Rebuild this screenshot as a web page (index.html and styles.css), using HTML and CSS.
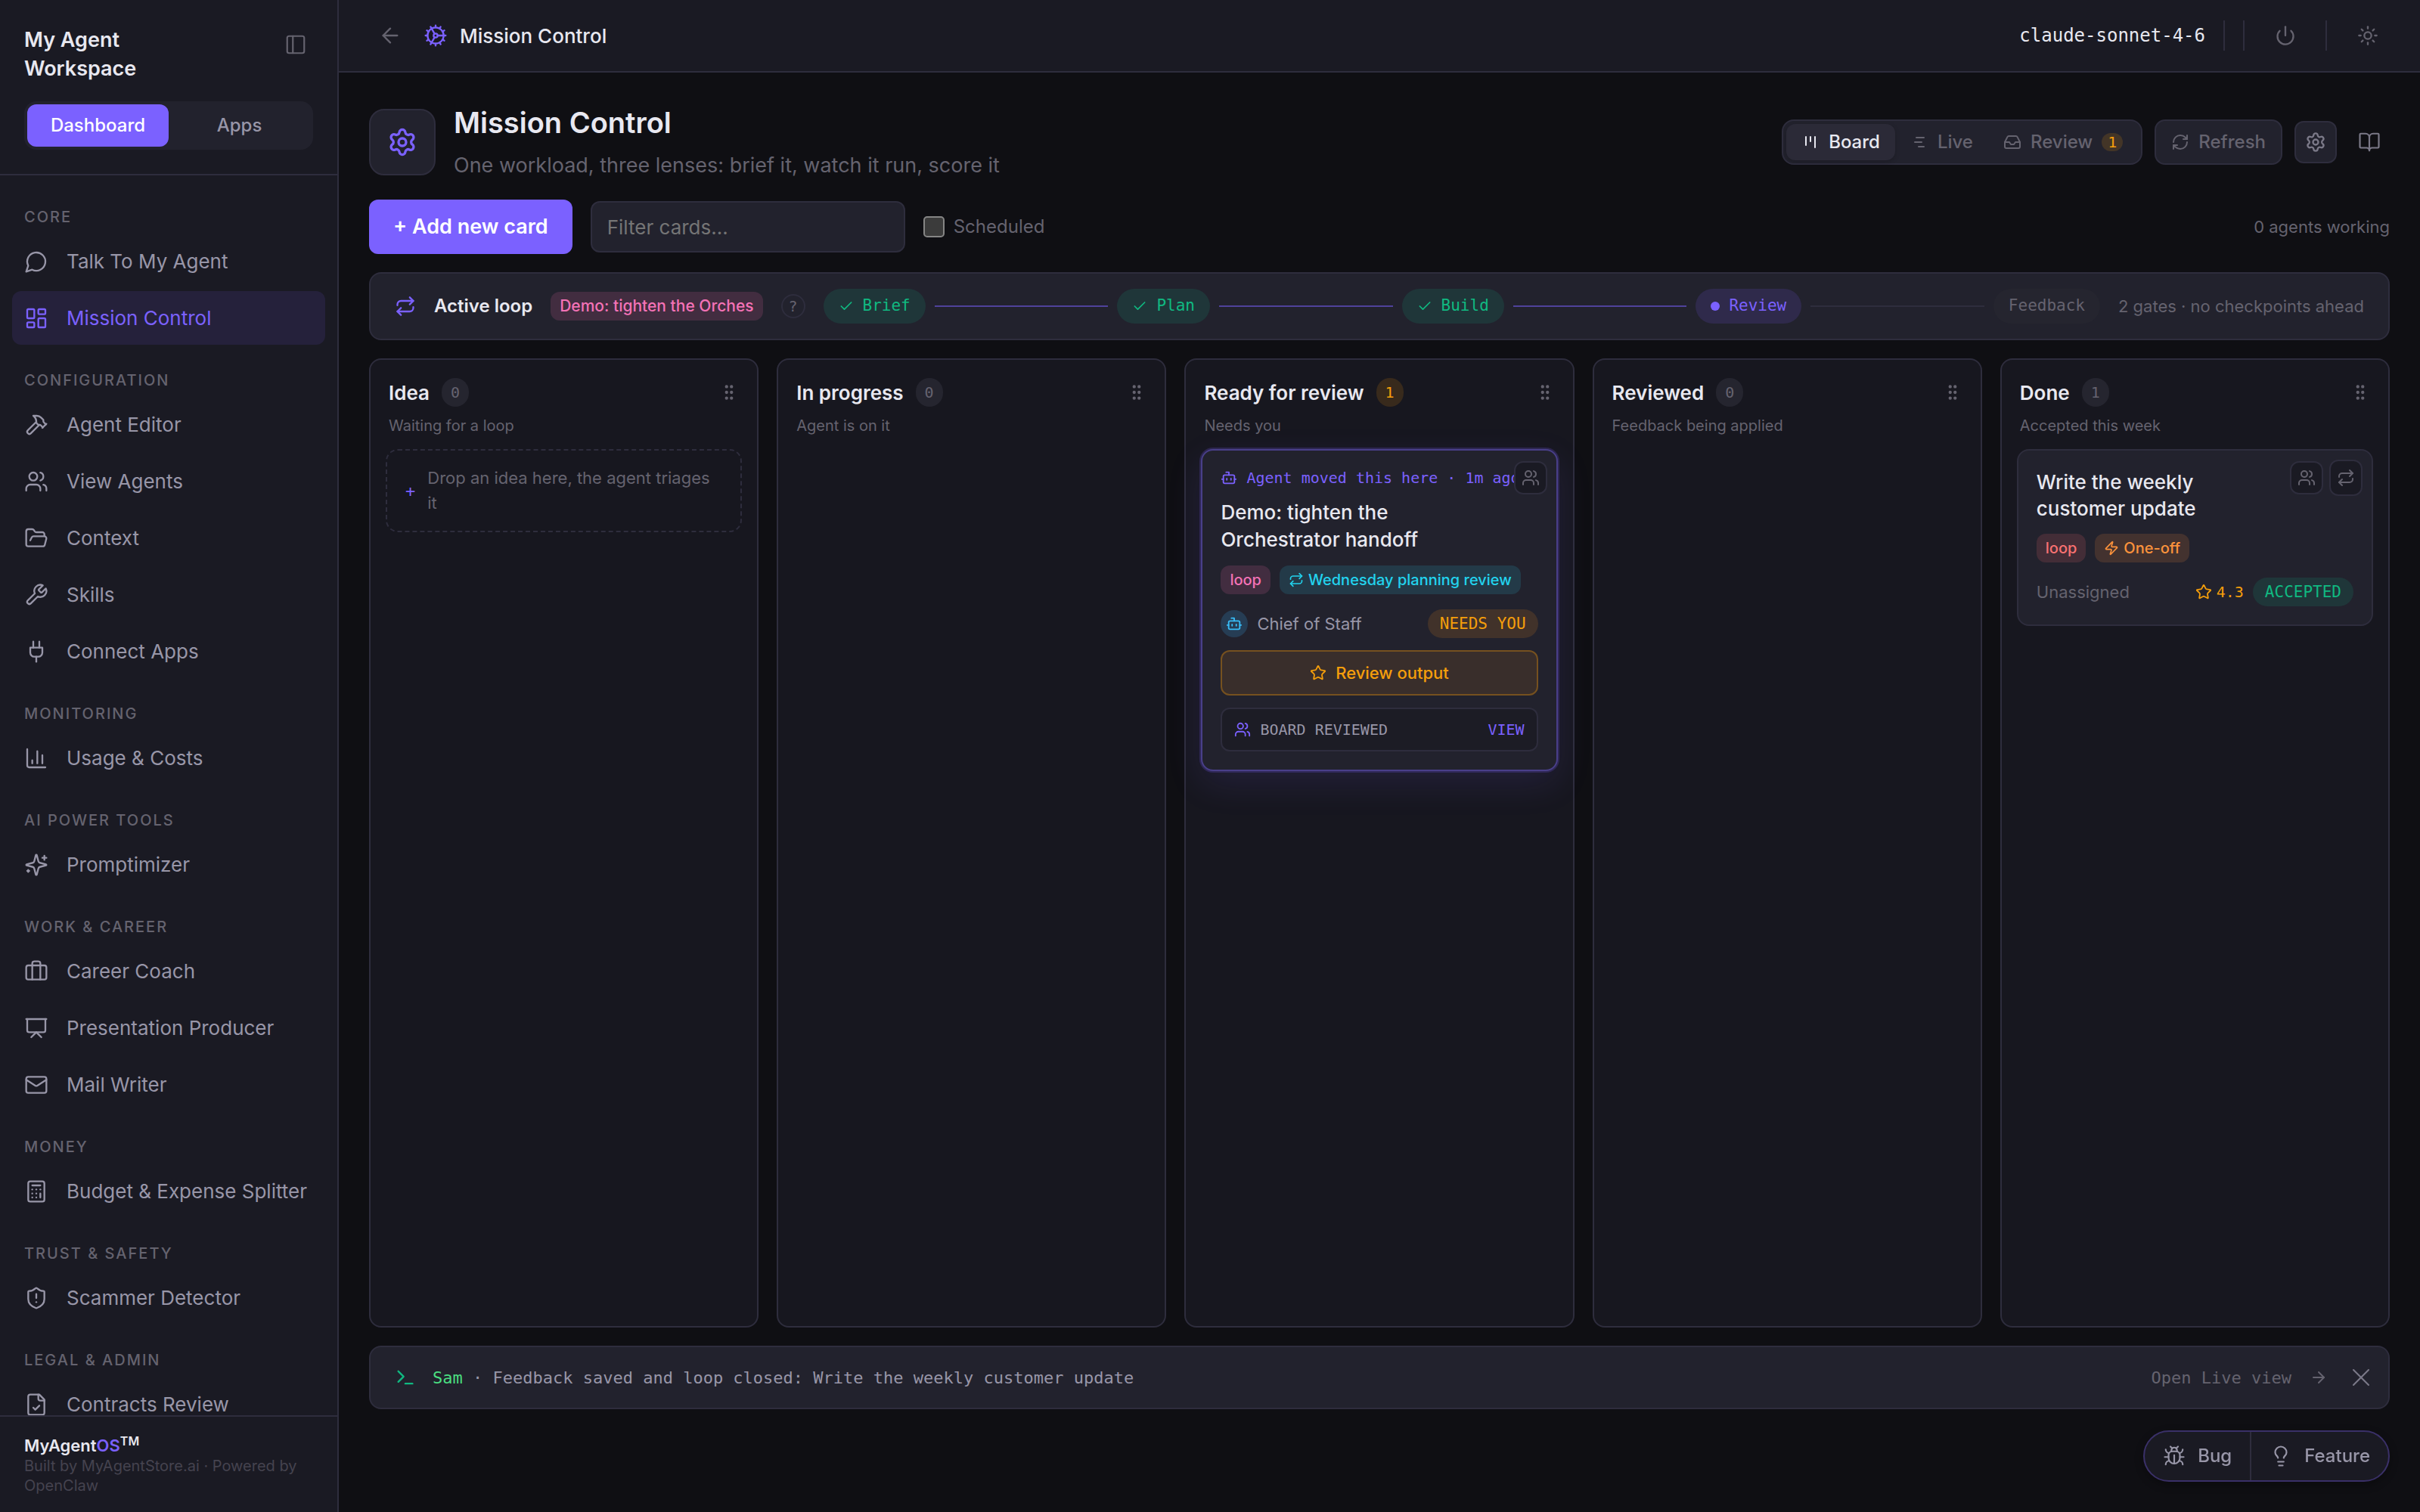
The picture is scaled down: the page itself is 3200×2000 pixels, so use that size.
FILE: index.html
```html
<!DOCTYPE html>
<html lang="en">
<head>
    <meta charset="UTF-8">
    <meta name="viewport" content="width=device-width, initial-scale=1.0">
    <title>Mission Control</title>
    <link rel="stylesheet" href="styles.css">
</head>
<body>
    <!-- Icon sprite -->
    <svg class="sprite" aria-hidden="true">
        <symbol id="i-panel" viewBox="0 0 24 24"><rect x="3" y="3" width="18" height="18" rx="2"/><path d="M9 3v18"/></symbol>
        <symbol id="i-chat" viewBox="0 0 24 24"><path d="M7.9 20A9 9 0 1 0 4 16.1L2 22Z"/></symbol>
        <symbol id="i-dashboard" viewBox="0 0 24 24"><rect x="3" y="3" width="7" height="9" rx="1"/><rect x="14" y="3" width="7" height="5" rx="1"/><rect x="14" y="12" width="7" height="9" rx="1"/><rect x="3" y="16" width="7" height="5" rx="1"/></symbol>
        <symbol id="i-hammer" viewBox="0 0 24 24"><path d="m15 12-8.373 8.373a1 1 0 1 1-3-3L12 9"/><path d="m18 15 4-4"/><path d="m21.5 11.5-1.914-1.914A2 2 0 0 1 19 8.172V7l-2.26-2.26a6 6 0 0 0-4.202-1.756L9 2.96l.92.82A6.18 6.18 0 0 1 12 8.4V10l2 2h1.172a2 2 0 0 1 1.414.586L18.5 14.5"/></symbol>
        <symbol id="i-users" viewBox="0 0 24 24"><path d="M16 21v-2a4 4 0 0 0-4-4H6a4 4 0 0 0-4 4v2"/><circle cx="9" cy="7" r="4"/><path d="M22 21v-2a4 4 0 0 0-3-3.87"/><path d="M16 3.13a4 4 0 0 1 0 7.75"/></symbol>
        <symbol id="i-folder" viewBox="0 0 24 24"><path d="m6 14 1.5-2.9A2 2 0 0 1 9.24 10H20a2 2 0 0 1 1.94 2.5l-1.54 6a2 2 0 0 1-1.95 1.5H4a2 2 0 0 1-2-2V5a2 2 0 0 1 2-2h3.9a2 2 0 0 1 1.69.9l.81 1.2a2 2 0 0 0 1.67.9H18a2 2 0 0 1 2 2v2"/></symbol>
        <symbol id="i-wrench" viewBox="0 0 24 24"><path d="M14.7 6.3a1 1 0 0 0 0 1.4l1.6 1.6a1 1 0 0 0 1.4 0l3.77-3.77a6 6 0 0 1-7.94 7.94l-6.91 6.91a2.12 2.12 0 0 1-3-3l6.91-6.91a6 6 0 0 1 7.94-7.94l-3.76 3.76z"/></symbol>
        <symbol id="i-plug" viewBox="0 0 24 24"><path d="M12 22v-5"/><path d="M9 8V2"/><path d="M15 8V2"/><path d="M18 8v5a4 4 0 0 1-4 4h-4a4 4 0 0 1-4-4V8Z"/></symbol>
        <symbol id="i-chart" viewBox="0 0 24 24"><path d="M3 3v16a2 2 0 0 0 2 2h16"/><path d="M18 17V9"/><path d="M13 17V5"/><path d="M8 17v-3"/></symbol>
        <symbol id="i-sparkles" viewBox="0 0 24 24"><path d="M9.937 15.5A2 2 0 0 0 8.5 14.063l-6.135-1.582a.5.5 0 0 1 0-.962L8.5 9.936A2 2 0 0 0 9.937 8.5l1.582-6.135a.5.5 0 0 1 .963 0L14.063 8.5A2 2 0 0 0 15.5 9.937l6.135 1.581a.5.5 0 0 1 0 .964L15.5 14.063a2 2 0 0 0-1.437 1.437l-1.582 6.135a.5.5 0 0 1-.963 0z"/><path d="M20 3v4"/><path d="M22 5h-4"/><path d="M4 17v2"/><path d="M5 18H3"/></symbol>
        <symbol id="i-briefcase" viewBox="0 0 24 24"><path d="M16 20V4a2 2 0 0 0-2-2h-4a2 2 0 0 0-2 2v16"/><rect x="2" y="6" width="20" height="14" rx="2"/></symbol>
        <symbol id="i-presentation" viewBox="0 0 24 24"><path d="M2 3h20"/><path d="M21 3v11a2 2 0 0 1-2 2H5a2 2 0 0 1-2-2V3"/><path d="m7 21 5-5 5 5"/></symbol>
        <symbol id="i-mail" viewBox="0 0 24 24"><rect x="2" y="4" width="20" height="16" rx="2"/><path d="m22 7-8.97 5.7a1.94 1.94 0 0 1-2.06 0L2 7"/></symbol>
        <symbol id="i-calculator" viewBox="0 0 24 24"><rect x="4" y="2" width="16" height="20" rx="2"/><path d="M8 6h8"/><path d="M16 14v4"/><path d="M16 10h.01"/><path d="M12 10h.01"/><path d="M8 10h.01"/><path d="M12 14h.01"/><path d="M8 14h.01"/><path d="M12 18h.01"/><path d="M8 18h.01"/></symbol>
        <symbol id="i-shield" viewBox="0 0 24 24"><path d="M20 13c0 5-3.5 7.5-7.66 8.95a1 1 0 0 1-.67-.01C7.5 20.5 4 18 4 13V6a1 1 0 0 1 1-1c2 0 4.5-1.2 6.24-2.72a1.17 1.17 0 0 1 1.52 0C14.51 3.81 17 5 19 5a1 1 0 0 1 1 1z"/><path d="M12 8v4"/><path d="M12 16h.01"/></symbol>
        <symbol id="i-file" viewBox="0 0 24 24"><path d="M15 2H6a2 2 0 0 0-2 2v16a2 2 0 0 0 2 2h12a2 2 0 0 0 2-2V7Z"/><path d="M14 2v4a2 2 0 0 0 2 2h4"/><path d="m9 15 2 2 4-4"/></symbol>
        <symbol id="i-back" viewBox="0 0 24 24"><path d="m12 19-7-7 7-7"/><path d="M19 12H5"/></symbol>
        <symbol id="i-cog" viewBox="0 0 24 24"><circle cx="12" cy="12" r="8"/><circle cx="12" cy="12" r="2"/><path d="M12 2v2"/><path d="M12 22v-2"/><path d="m17 20.66-1-1.73"/><path d="M11 10.27 7 3.34"/><path d="m20.66 17-1.73-1"/><path d="m3.34 7 1.73 1"/><path d="M14 12h8"/><path d="M2 12h2"/><path d="m20.66 7-1.73 1"/><path d="m3.34 17 1.73-1"/><path d="m17 3.34-1 1.73"/><path d="m11 13.73-4 6.93"/></symbol>
        <symbol id="i-power" viewBox="0 0 24 24"><path d="M12 2v10"/><path d="M18.4 6.6a9 9 0 1 1-12.77.04"/></symbol>
        <symbol id="i-sun" viewBox="0 0 24 24"><circle cx="12" cy="12" r="4"/><path d="M12 2v2"/><path d="M12 20v2"/><path d="m4.93 4.93 1.41 1.41"/><path d="m17.66 17.66 1.41 1.41"/><path d="M2 12h2"/><path d="M20 12h2"/><path d="m6.34 17.66-1.41 1.41"/><path d="m19.07 4.93-1.41 1.41"/></symbol>
        <symbol id="i-settings" viewBox="0 0 24 24"><path d="M9.671 4.136a2.34 2.34 0 0 1 4.659 0 2.34 2.34 0 0 0 3.319 1.915 2.34 2.34 0 0 1 2.33 4.033 2.34 2.34 0 0 0 0 3.831 2.34 2.34 0 0 1-2.33 4.033 2.34 2.34 0 0 0-3.319 1.915 2.34 2.34 0 0 1-4.659 0 2.34 2.34 0 0 0-3.32-1.915 2.34 2.34 0 0 1-2.33-4.033 2.34 2.34 0 0 0 0-3.831A2.34 2.34 0 0 1 6.35 6.051a2.34 2.34 0 0 0 3.319-1.915"/><circle cx="12" cy="12" r="3"/></symbol>
        <symbol id="i-kanban" viewBox="0 0 24 24"><path d="M6 5v11"/><path d="M12 5v6"/><path d="M18 5v14"/></symbol>
        <symbol id="i-gantt" viewBox="0 0 24 24"><path d="M8 6h10"/><path d="M6 12h9"/><path d="M11 18h7"/></symbol>
        <symbol id="i-inbox" viewBox="0 0 24 24"><path d="M22 12h-6l-2 3h-4l-2-3H2"/><path d="M5.45 5.11 2 12v6a2 2 0 0 0 2 2h16a2 2 0 0 0 2-2v-6l-3.45-6.89A2 2 0 0 0 16.76 4H7.24a2 2 0 0 0-1.79 1.11z"/></symbol>
        <symbol id="i-refresh" viewBox="0 0 24 24"><path d="M3 12a9 9 0 0 1 9-9 9.75 9.75 0 0 1 6.74 2.74L21 8"/><path d="M21 3v5h-5"/><path d="M21 12a9 9 0 0 1-9 9 9.75 9.75 0 0 1-6.74-2.74L3 16"/><path d="M8 16H3v5"/></symbol>
        <symbol id="i-book" viewBox="0 0 24 24"><path d="M12 7v14"/><path d="M3 18a1 1 0 0 1-1-1V4a1 1 0 0 1 1-1h5a4 4 0 0 1 4 4 4 4 0 0 1 4-4h5a1 1 0 0 1 1 1v13a1 1 0 0 1-1 1h-6a3 3 0 0 0-3 3 3 3 0 0 0-3-3z"/></symbol>
        <symbol id="i-repeat" viewBox="0 0 24 24"><path d="m17 2 4 4-4 4"/><path d="M3 11v-1a4 4 0 0 1 4-4h14"/><path d="m7 22-4-4 4-4"/><path d="M21 13v1a4 4 0 0 1-4 4H3"/></symbol>
        <symbol id="i-check" viewBox="0 0 24 24"><path d="M20 6 9 17l-5-5"/></symbol>
        <symbol id="i-grip" viewBox="0 0 24 24"><circle cx="9" cy="5" r="1"/><circle cx="9" cy="12" r="1"/><circle cx="9" cy="19" r="1"/><circle cx="15" cy="5" r="1"/><circle cx="15" cy="12" r="1"/><circle cx="15" cy="19" r="1"/></symbol>
        <symbol id="i-bot" viewBox="0 0 24 24"><path d="M12 8V4H8"/><rect x="4" y="8" width="16" height="12" rx="2"/><path d="M2 14h2"/><path d="M20 14h2"/><path d="M15 13v2"/><path d="M9 13v2"/></symbol>
        <symbol id="i-star" viewBox="0 0 24 24"><path d="M11.525 2.295a.53.53 0 0 1 .95 0l2.31 4.679a2.123 2.123 0 0 0 1.595 1.16l5.166.756a.53.53 0 0 1 .294.904l-3.736 3.638a2.123 2.123 0 0 0-.611 1.878l.882 5.14a.53.53 0 0 1-.771.56l-4.618-2.428a2.122 2.122 0 0 0-1.973 0L6.396 21.01a.53.53 0 0 1-.77-.56l.881-5.139a2.122 2.122 0 0 0-.611-1.879L2.16 9.795a.53.53 0 0 1 .294-.906l5.165-.755a2.122 2.122 0 0 0 1.597-1.16z"/></symbol>
        <symbol id="i-zap" viewBox="0 0 24 24"><path d="M4 14a1 1 0 0 1-.78-1.63l9.9-10.2a.5.5 0 0 1 .86.46l-1.92 6.02A1 1 0 0 0 13 10h7a1 1 0 0 1 .78 1.63l-9.9 10.2a.5.5 0 0 1-.86-.46l1.92-6.02A1 1 0 0 0 11 14z"/></symbol>
        <symbol id="i-terminal" viewBox="0 0 24 24"><path d="m4 17 6-6-6-6"/><path d="M12 19h8"/></symbol>
        <symbol id="i-arrow" viewBox="0 0 24 24"><path d="M5 12h14"/><path d="m12 5 7 7-7 7"/></symbol>
        <symbol id="i-close" viewBox="0 0 24 24"><path d="M18 6 6 18"/><path d="m6 6 12 12"/></symbol>
        <symbol id="i-bug" viewBox="0 0 24 24"><path d="m8 2 1.88 1.88"/><path d="M14.12 3.88 16 2"/><path d="M9 7.13v-1a3.003 3.003 0 1 1 6 0v1"/><path d="M12 20c-3.3 0-6-2.7-6-6v-3a4 4 0 0 1 4-4h4a4 4 0 0 1 4 4v3c0 3.3-2.7 6-6 6"/><path d="M12 20v-9"/><path d="M6.53 9C4.6 8.8 3 7.1 3 5"/><path d="M6 13H2"/><path d="M3 21c0-2.1 1.7-3.9 3.8-4"/><path d="M20.97 5c0 2.1-1.6 3.8-3.5 4"/><path d="M22 13h-4"/><path d="M17.2 17c2.1.1 3.8 1.9 3.8 4"/></symbol>
        <symbol id="i-bulb" viewBox="0 0 24 24"><path d="M15 14c.2-1 .7-1.7 1.5-2.5 1-.9 1.5-2.2 1.5-3.5A6 6 0 0 0 6 8c0 1 .2 2.2 1.5 3.5.7.7 1.3 1.5 1.5 2.5"/><path d="M9 18h6"/><path d="M10 22h4"/></symbol>
    </svg>

    <div class="app">
        <!-- Sidebar -->
        <aside class="sidebar">
            <div class="sidebar-head">
                <div class="workspace">
                    <div class="workspace-name">My Agent Workspace</div>
                    <button class="icon-btn" type="button" aria-label="Collapse sidebar"><svg class="icon icon-30"><use href="#i-panel"/></svg></button>
                </div>
                <div class="tabs">
                    <button class="tab active" type="button">Dashboard</button>
                    <button class="tab" type="button">Apps</button>
                </div>
            </div>

            <nav class="nav">
                <section class="nav-group">
                    <h2 class="nav-label">Core</h2>
                    <a class="nav-item" href="#"><svg class="icon icon-32"><use href="#i-chat"/></svg>Talk To My Agent</a>
                    <a class="nav-item active" href="#"><svg class="icon icon-32"><use href="#i-dashboard"/></svg>Mission Control</a>
                </section>
                <section class="nav-group">
                    <h2 class="nav-label">Configuration</h2>
                    <a class="nav-item" href="#"><svg class="icon icon-32"><use href="#i-hammer"/></svg>Agent Editor</a>
                    <a class="nav-item" href="#"><svg class="icon icon-32"><use href="#i-users"/></svg>View Agents</a>
                    <a class="nav-item" href="#"><svg class="icon icon-32"><use href="#i-folder"/></svg>Context</a>
                    <a class="nav-item" href="#"><svg class="icon icon-32"><use href="#i-wrench"/></svg>Skills</a>
                    <a class="nav-item" href="#"><svg class="icon icon-32"><use href="#i-plug"/></svg>Connect Apps</a>
                </section>
                <section class="nav-group">
                    <h2 class="nav-label">Monitoring</h2>
                    <a class="nav-item" href="#"><svg class="icon icon-32"><use href="#i-chart"/></svg>Usage &amp; Costs</a>
                </section>
                <section class="nav-group">
                    <h2 class="nav-label">AI Power Tools</h2>
                    <a class="nav-item" href="#"><svg class="icon icon-32"><use href="#i-sparkles"/></svg>Promptimizer</a>
                </section>
                <section class="nav-group">
                    <h2 class="nav-label">Work &amp; Career</h2>
                    <a class="nav-item" href="#"><svg class="icon icon-32"><use href="#i-briefcase"/></svg>Career Coach</a>
                    <a class="nav-item" href="#"><svg class="icon icon-32"><use href="#i-presentation"/></svg>Presentation Producer</a>
                    <a class="nav-item" href="#"><svg class="icon icon-32"><use href="#i-mail"/></svg>Mail Writer</a>
                </section>
                <section class="nav-group">
                    <h2 class="nav-label">Money</h2>
                    <a class="nav-item" href="#"><svg class="icon icon-32"><use href="#i-calculator"/></svg>Budget &amp; Expense Splitter</a>
                </section>
                <section class="nav-group">
                    <h2 class="nav-label">Trust &amp; Safety</h2>
                    <a class="nav-item" href="#"><svg class="icon icon-32"><use href="#i-shield"/></svg>Scammer Detector</a>
                </section>
                <section class="nav-group">
                    <h2 class="nav-label">Legal &amp; Admin</h2>
                    <a class="nav-item" href="#"><svg class="icon icon-32"><use href="#i-file"/></svg>Contracts Review</a>
                </section>
            </nav>

            <footer class="sidebar-foot">
                <div class="brand">MyAgent<span class="brand-os">OS</span><sup class="brand-tm">TM</sup></div>
                <div class="credit">Built by MyAgentStore.ai · Powered by OpenClaw</div>
            </footer>
        </aside>

        <div class="main">
            <!-- Top bar -->
            <header class="topbar">
                <button class="icon-btn" type="button" aria-label="Back"><svg class="icon icon-32"><use href="#i-back"/></svg></button>
                <svg class="icon icon-32 topbar-cog"><use href="#i-cog"/></svg>
                <span class="topbar-title">Mission Control</span>
                <div class="topbar-right">
                    <span class="model">claude-sonnet-4-6</span>
                    <span class="divider"></span>
                    <span class="divider"></span>
                    <button class="icon-btn topbar-btn" type="button" aria-label="Power"><svg class="icon icon-28"><use href="#i-power"/></svg></button>
                    <span class="divider"></span>
                    <button class="icon-btn topbar-btn" type="button" aria-label="Toggle theme"><svg class="icon icon-28"><use href="#i-sun"/></svg></button>
                </div>
            </header>

            <main class="content">
                <div class="page-head">
                    <div class="page-icon"><svg class="icon icon-40"><use href="#i-settings"/></svg></div>
                    <div class="page-titles">
                        <h1>Mission Control</h1>
                        <p>One workload, three lenses: brief it, watch it run, score it</p>
                    </div>
                    <div class="page-actions">
                        <div class="views">
                            <button class="view active" type="button"><svg class="icon icon-24"><use href="#i-kanban"/></svg>Board</button>
                            <button class="view" type="button"><svg class="icon icon-24"><use href="#i-gantt"/></svg>Live</button>
                            <button class="view" type="button"><svg class="icon icon-24"><use href="#i-inbox"/></svg>Review<span class="view-count">1</span></button>
                        </div>
                        <button class="btn-refresh" type="button"><svg class="icon icon-24"><use href="#i-refresh"/></svg>Refresh</button>
                        <button class="btn-settings" type="button" aria-label="Settings"><svg class="icon icon-28"><use href="#i-settings"/></svg></button>
                        <button class="icon-btn btn-book" type="button" aria-label="Guide"><svg class="icon icon-30"><use href="#i-book"/></svg></button>
                    </div>
                </div>

                <div class="toolbar">
                    <button class="btn-add" type="button">+ Add new card</button>
                    <input class="filter" type="text" placeholder="Filter cards..." aria-label="Filter cards">
                    <label class="scheduled"><input type="checkbox">Scheduled</label>
                    <span class="working">0 agents working</span>
                </div>

                <!-- Active loop progress -->
                <section class="loop">
                    <svg class="icon icon-28 loop-icon"><use href="#i-repeat"/></svg>
                    <span class="loop-title">Active loop</span>
                    <span class="tag tag-pink loop-tag">Demo: tighten the Orches</span>
                    <button class="help" type="button" aria-label="What is a loop">?</button>
                    <div class="steps">
                        <span class="step done"><svg class="icon icon-20"><use href="#i-check"/></svg>Brief</span>
                        <span class="line filled"></span>
                        <span class="step done"><svg class="icon icon-20"><use href="#i-check"/></svg>Plan</span>
                        <span class="line filled"></span>
                        <span class="step done"><svg class="icon icon-20"><use href="#i-check"/></svg>Build</span>
                        <span class="line filled"></span>
                        <span class="step current"><span class="dot"></span>Review</span>
                        <span class="line"></span>
                        <span class="step">Feedback</span>
                    </div>
                    <span class="gates">2 gates · no checkpoints ahead</span>
                </section>

                <!-- Board -->
                <div class="board">
                    <section class="column">
                        <div class="column-head"><h3>Idea</h3><span class="count">0</span><svg class="icon icon-26 grip"><use href="#i-grip"/></svg></div>
                        <p class="column-sub">Waiting for a loop</p>
                        <button class="drop" type="button"><span class="plus">+</span><span>Drop an idea here, the agent triages it</span></button>
                    </section>
                    <section class="column">
                        <div class="column-head"><h3>In progress</h3><span class="count">0</span><svg class="icon icon-26 grip"><use href="#i-grip"/></svg></div>
                        <p class="column-sub">Agent is on it</p>
                    </section>
                    <section class="column">
                        <div class="column-head"><h3>Ready for review</h3><span class="count alert">1</span><svg class="icon icon-26 grip"><use href="#i-grip"/></svg></div>
                        <p class="column-sub">Needs you</p>
                        <article class="card highlight">
                            <div class="moved"><svg class="icon icon-22"><use href="#i-bot"/></svg>Agent moved this here · 1m ago</div>
                            <h4>Demo: tighten the Orchestrator handoff</h4>
                            <div class="tags">
                                <span class="tag tag-pink">loop</span>
                                <span class="tag tag-cyan"><svg class="icon icon-20"><use href="#i-repeat"/></svg>Wednesday planning review</span>
                            </div>
                            <div class="card-meta">
                                <span class="avatar"><svg class="icon icon-22"><use href="#i-bot"/></svg></span>
                                <span class="assignee">Chief of Staff</span>
                                <span class="status needs">Needs you</span>
                            </div>
                            <button class="btn-review" type="button"><svg class="icon icon-22"><use href="#i-star"/></svg>Review output</button>
                            <button class="board-reviewed" type="button"><svg class="icon icon-22"><use href="#i-users"/></svg>BOARD REVIEWED<span class="view-link">VIEW</span></button>
                            <div class="card-tools">
                                <button class="tool" type="button" aria-label="Send to board"><svg class="icon icon-24"><use href="#i-users"/></svg></button>
                            </div>
                        </article>
                    </section>
                    <section class="column">
                        <div class="column-head"><h3>Reviewed</h3><span class="count">0</span><svg class="icon icon-26 grip"><use href="#i-grip"/></svg></div>
                        <p class="column-sub">Feedback being applied</p>
                    </section>
                    <section class="column">
                        <div class="column-head"><h3>Done</h3><span class="count">1</span><svg class="icon icon-26 grip"><use href="#i-grip"/></svg></div>
                        <p class="column-sub">Accepted this week</p>
                        <article class="card">
                            <h4>Write the weekly customer update</h4>
                            <div class="tags">
                                <span class="tag tag-red">loop</span>
                                <span class="tag tag-orange"><svg class="icon icon-20"><use href="#i-zap"/></svg>One-off</span>
                            </div>
                            <div class="card-meta">
                                <span class="assignee unassigned">Unassigned</span>
                                <span class="score"><svg class="icon icon-22"><use href="#i-star"/></svg>4.3</span>
                                <span class="status accepted">Accepted</span>
                            </div>
                            <div class="card-tools">
                                <button class="tool" type="button" aria-label="Send to board"><svg class="icon icon-24"><use href="#i-users"/></svg></button>
                                <button class="tool tool-tall" type="button" aria-label="Repeat"><svg class="icon icon-24"><use href="#i-repeat"/></svg></button>
                            </div>
                        </article>
                    </section>
                </div>

                <!-- Latest activity -->
                <div class="activity">
                    <svg class="icon icon-28 activity-icon"><use href="#i-terminal"/></svg>
                    <span class="activity-text"><span class="who">Sam</span> · Feedback saved and loop closed: Write the weekly customer update</span>
                    <a class="live-link" href="#">Open Live view<svg class="icon icon-24"><use href="#i-arrow"/></svg></a>
                    <button class="icon-btn btn-close" type="button" aria-label="Dismiss"><svg class="icon icon-40"><use href="#i-close"/></svg></button>
                </div>
            </main>
        </div>
    </div>

    <div class="feedback">
        <button type="button"><svg class="icon icon-30"><use href="#i-bug"/></svg>Bug</button>
        <button type="button"><svg class="icon icon-30"><use href="#i-bulb"/></svg>Feature</button>
    </div>
</body>
</html>
```
FILE: styles.css
```css
:root {
    --bg: #0f0f13;
    --surface: #1a1a23;
    --raised: #22222d;
    --column: #17171f;
    --border: #2e2d3d;
    --text: #e8e8f0;
    --muted: #9896a8;
    --dim: #65636f;
    --accent: #7b61ff;
    --amber: #f59e0b;
    --green: #10b981;
    --mono: "DejaVu Sans Mono", monospace;
}

* {
    box-sizing: border-box;
}

body {
    margin: 0;
    background: var(--bg);
    color: var(--text);
    font-family: Inter, sans-serif;
    font-size: 26px;
    line-height: 1.5;
}

h1, h2, h3, h4, p {
    margin: 0;
}

button, input {
    font: inherit;
    color: inherit;
}

button {
    padding: 0;
    border: none;
    background: none;
    cursor: pointer;
}

a {
    color: inherit;
    text-decoration: none;
}

/* Icons */
.sprite {
    display: none;
}

.icon {
    flex: none;
    fill: none;
    stroke: currentColor;
    stroke-width: 2;
    stroke-linecap: round;
    stroke-linejoin: round;
}

.icon-20 { width: 20px; height: 20px; }
.icon-22 { width: 22px; height: 22px; }
.icon-24 { width: 24px; height: 24px; }
.icon-26 { width: 26px; height: 26px; }
.icon-28 { width: 28px; height: 28px; }
.icon-30 { width: 30px; height: 30px; }
.icon-32 { width: 32px; height: 32px; }
.icon-40 { width: 40px; height: 40px; }

.icon-30,
.icon-32 {
    stroke-width: 1.75;
}

.icon-btn {
    display: flex;
    align-items: center;
    justify-content: center;
    color: var(--dim);
}

/* Layout */
.app {
    display: flex;
    height: 100vh;
}

.main {
    flex: 1;
    min-width: 0;
    display: flex;
    flex-direction: column;
}

/* Sidebar */
.sidebar {
    flex: none;
    width: 448px;
    display: flex;
    flex-direction: column;
    background: var(--surface);
    border-right: 2px solid var(--border);
}

.sidebar-head {
    padding: 34px 32px 32px;
    border-bottom: 2px solid var(--border);
}

.workspace {
    display: flex;
    align-items: flex-start;
    justify-content: space-between;
    margin-bottom: 24px;
}

.workspace .icon-btn {
    padding: 10px 8px;
}

.workspace-name {
    width: 200px;
    font-size: 27px;
    font-weight: 600;
    line-height: 38px;
}

.tabs {
    display: flex;
    padding: 4px;
    background: var(--raised);
    border-radius: 16px;
}

.tab {
    flex: 1;
    height: 56px;
    border-radius: 12px;
    font-size: 24px;
    font-weight: 500;
    color: var(--muted);
}

.tab.active {
    background: var(--accent);
    color: #fff;
}

.nav {
    flex: 1;
    min-height: 0;
    overflow: hidden;
    padding: 40px 16px 0;
}

.nav-group {
    margin-bottom: 32px;
}

.nav-label {
    padding: 0 16px 8px;
    font-size: 20px;
    font-weight: 500;
    line-height: 30px;
    letter-spacing: 2px;
    text-transform: uppercase;
    color: var(--dim);
}

.nav-item {
    display: flex;
    align-items: center;
    gap: 24px;
    height: 71px;
    padding: 0 16px;
    border-radius: 12px;
    white-space: nowrap;
    color: var(--muted);
}

.nav-item + .nav-item {
    margin-top: 4px;
}

.nav-item.active {
    background: #25213b;
    color: var(--accent);
}

.sidebar-foot {
    padding: 24px 32px 22px;
    border-top: 2px solid var(--border);
}

.brand {
    font-size: 22px;
    font-weight: 600;
    line-height: 28px;
}

.brand-os {
    color: var(--accent);
}

.brand-tm {
    font-size: 16px;
    line-height: 0;
}

.credit {
    font-size: 20px;
    line-height: 26px;
    color: #45434f;
}

/* Top bar */
.topbar {
    flex: none;
    display: flex;
    align-items: center;
    height: 96px;
    padding: 0 40px 0 52px;
    background: var(--surface);
    border-bottom: 2px solid var(--border);
}

.topbar-cog {
    margin: 0 16px 0 28px;
    color: var(--accent);
}

.topbar-title {
    font-weight: 500;
}

.topbar-right {
    display: flex;
    align-items: center;
    gap: 24px;
    margin-left: auto;
}

.model {
    font-family: var(--mono);
    font-size: 24px;
}

.divider {
    width: 2px;
    height: 40px;
    background: var(--border);
}

.topbar-btn {
    width: 59px;
    height: 56px;
}

/* Page head */
.content {
    flex: 1;
    min-height: 0;
    display: flex;
    flex-direction: column;
    padding: 42px 40px 136px;
}

.page-head {
    display: flex;
    align-items: center;
    gap: 24px;
    margin-bottom: 26px;
}

.page-icon {
    display: grid;
    place-items: center;
    width: 88px;
    height: 88px;
    background: var(--raised);
    border: 2px solid var(--border);
    border-radius: 20px;
    color: var(--accent);
}

.page-titles h1 {
    font-size: 38px;
    font-weight: 600;
    line-height: 48px;
}

.page-titles p {
    margin-top: 14px;
    font-size: 27px;
    line-height: 38px;
    color: var(--dim);
}

.page-actions {
    display: flex;
    align-items: center;
    gap: 16px;
    margin-left: auto;
    font-size: 24px;
    font-weight: 500;
    color: var(--dim);
}

.views {
    display: flex;
    padding: 4px;
    background: var(--raised);
    border: 2px solid var(--border);
    border-radius: 16px;
}

.view {
    display: flex;
    align-items: center;
    gap: 12px;
    height: 48px;
    padding: 0 20px;
    border-radius: 12px;
}

.view.active {
    background: #2b2a37;
    color: var(--text);
    box-shadow: 0 2px 6px rgba(0, 0, 0, 0.2);
}

.view-count {
    width: 28px;
    height: 24px;
    border-radius: 12px;
    background: rgba(245, 158, 11, 0.16);
    color: var(--amber);
    font-family: var(--mono);
    font-size: 20px;
    font-weight: 400;
    line-height: 24px;
}

.btn-refresh {
    display: flex;
    align-items: center;
    gap: 12px;
    height: 60px;
    padding: 0 20px;
    background: var(--raised);
    border: 2px solid var(--border);
    border-radius: 14px;
}

.btn-settings {
    display: grid;
    place-items: center;
    width: 56px;
    height: 56px;
    background: var(--raised);
    border: 2px solid var(--border);
    border-radius: 12px;
    color: #7b7988;
}

.btn-book {
    width: 54px;
    height: 56px;
    color: #7b7988;
}

/* Toolbar */
.toolbar {
    display: flex;
    align-items: center;
    gap: 24px;
    margin-bottom: 24px;
}

.btn-add {
    height: 72px;
    padding: 0 32px;
    background: var(--accent);
    border-radius: 12px;
    color: #fff;
    font-size: 27px;
    font-weight: 600;
}

.filter {
    width: 416px;
    height: 68px;
    padding: 0 20px;
    background: var(--raised);
    border: 2px solid var(--border);
    border-radius: 12px;
}

.filter::placeholder {
    color: #757575;
    opacity: 1;
}

.scheduled {
    display: flex;
    align-items: center;
    gap: 12px;
    font-size: 24px;
    color: var(--dim);
}

.scheduled input {
    appearance: none;
    width: 28px;
    height: 28px;
    margin: 0;
    background: #3b3b3b;
    border: 2px solid #858585;
    border-radius: 5px;
}

.scheduled input:checked {
    background: var(--accent);
    border-color: var(--accent);
}

.working {
    margin-left: auto;
    font-size: 22px;
    color: var(--dim);
}

/* Active loop */
.loop {
    display: flex;
    align-items: center;
    gap: 24px;
    height: 90px;
    margin-bottom: 24px;
    padding: 0 32px;
    background: var(--raised);
    border: 2px solid var(--border);
    border-radius: 16px;
    white-space: nowrap;
}

.loop-icon {
    color: var(--accent);
}

.loop-title {
    font-size: 24px;
    font-weight: 600;
}

.help {
    width: 32px;
    height: 32px;
    border: 2px solid var(--border);
    border-radius: 50%;
    color: var(--dim);
    font-family: var(--mono);
    font-size: 20px;
    line-height: 28px;
}

.steps {
    flex: 1;
    display: flex;
    align-items: center;
    gap: 12px;
    font-family: var(--mono);
    font-size: 21px;
}

.step {
    display: flex;
    align-items: center;
    gap: 12px;
    height: 46px;
    padding: 0 20px;
    border-radius: 23px;
    background: #25252f;
    color: var(--dim);
}

.step.done {
    background: #1f3639;
    color: var(--green);
}

.step.current {
    background: #2f2a4b;
    color: var(--accent);
}

.dot {
    width: 12px;
    height: 12px;
    border-radius: 50%;
    background: var(--accent);
}

.line {
    flex: 1;
    height: 2px;
    background: var(--border);
}

.line.filled {
    background: #4f429b;
}

.gates {
    font-size: 22px;
    color: var(--dim);
}

/* Tags */
.tags {
    display: flex;
    gap: 12px;
}

.tag {
    display: flex;
    align-items: center;
    gap: 6px;
    height: 38px;
    padding: 0 12px;
    border-radius: 12px;
    font-size: 20px;
    font-weight: 500;
}

.loop-tag {
    font-size: 21px;
}

.tag-pink {
    background: #422d40;
    color: #f472b6;
}

.tag-cyan {
    background: #233a48;
    color: #22d3ee;
}

.tag-red {
    background: #432d37;
    color: #f87171;
}

.tag-orange {
    background: #43322f;
    color: #fb923c;
}

/* Board */
.board {
    flex: 1;
    min-height: 0;
    display: grid;
    grid-template-columns: repeat(5, minmax(0, 1fr));
    gap: 24px;
    margin-bottom: 24px;
}

.column {
    padding: 24px 20px;
    background: var(--column);
    border: 2px solid var(--border);
    border-radius: 16px;
}

.column-head {
    display: flex;
    align-items: center;
    gap: 16px;
    height: 38px;
    padding: 0 4px;
}

.column-head h3 {
    font-size: 26px;
    font-weight: 600;
}

.count {
    height: 38px;
    padding: 0 12px;
    border-radius: 19px;
    background: #25252f;
    color: var(--dim);
    font-family: var(--mono);
    font-size: 20px;
    line-height: 38px;
}

.count.alert {
    background: #382a1c;
    color: var(--amber);
}

.grip {
    margin-left: auto;
    fill: currentColor;
    color: var(--dim);
}

.column-sub {
    margin: 10px 4px 16px;
    font-size: 20px;
    line-height: 30px;
    color: var(--dim);
}

.drop {
    display: flex;
    align-items: center;
    gap: 16px;
    width: 100%;
    padding: 20px 24px;
    border: 2px dashed var(--border);
    border-radius: 16px;
    color: var(--dim);
    font-size: 22px;
    line-height: 33px;
    text-align: left;
}

.plus {
    color: var(--accent);
    font-family: var(--mono);
}

/* Cards */
.card {
    position: relative;
    padding: 24px;
    background: var(--raised);
    border: 2px solid var(--border);
    border-radius: 16px;
}

.card.highlight {
    border-color: #493f89;
    box-shadow: 0 0 0 2px rgba(123, 97, 255, 0.2), 0 16px 48px rgba(123, 97, 255, 0.12);
}

.moved {
    display: flex;
    align-items: center;
    gap: 12px;
    height: 24px;
    margin-bottom: 16px;
    color: var(--accent);
    font-family: var(--mono);
    font-size: 20px;
    white-space: nowrap;
}

.card h4 {
    margin-bottom: 16px;
    padding-right: 112px;
    font-size: 26px;
    font-weight: 500;
    line-height: 35px;
}

.card.highlight h4 {
    line-height: 36px;
}

.card-meta {
    display: flex;
    align-items: center;
    gap: 12px;
    height: 38px;
    margin-top: 20px;
}

.avatar {
    display: grid;
    place-items: center;
    width: 36px;
    height: 36px;
    border-radius: 50%;
    background: #263d54;
    color: #38bdf8;
}

.assignee {
    margin-right: auto;
    font-size: 22px;
    color: var(--muted);
}

.assignee.unassigned {
    color: var(--dim);
}

.status {
    height: 38px;
    padding: 0 16px;
    border-radius: 19px;
    font-family: var(--mono);
    font-size: 21px;
    line-height: 38px;
    text-transform: uppercase;
}

.status.needs {
    background: #41322a;
    color: var(--amber);
}

.status.accepted {
    background: #1f3639;
    color: var(--green);
}

.score {
    display: flex;
    align-items: center;
    gap: 6px;
    color: var(--amber);
    font-family: var(--mono);
    font-size: 20px;
}

.btn-review {
    display: flex;
    align-items: center;
    justify-content: center;
    gap: 12px;
    width: 100%;
    height: 60px;
    margin-top: 16px;
    background: #392e2b;
    border: 2px solid #76511f;
    border-radius: 12px;
    color: var(--amber);
    font-size: 22px;
    font-weight: 500;
}

.board-reviewed {
    display: flex;
    align-items: center;
    gap: 12px;
    width: 100%;
    height: 58px;
    margin-top: 16px;
    padding: 0 16px;
    background: #1c1c25;
    border: 2px solid var(--border);
    border-radius: 12px;
    color: var(--muted);
    font-family: var(--mono);
    font-size: 20px;
}

.board-reviewed .icon,
.view-link {
    color: var(--accent);
}

.view-link {
    margin-left: auto;
}

.card-tools {
    position: absolute;
    top: 12px;
    right: 12px;
    display: flex;
    align-items: center;
    gap: 8px;
    height: 48px;
}

.tool {
    display: grid;
    place-items: center;
    width: 44px;
    height: 44px;
    background: var(--surface);
    border: 2px solid var(--border);
    border-radius: 12px;
    color: var(--dim);
}

.tool-tall {
    height: 48px;
}

/* Activity bar */
.activity {
    flex: none;
    display: flex;
    align-items: center;
    height: 84px;
    padding: 0 16px 0 32px;
    background: var(--raised);
    border: 2px solid var(--border);
    border-radius: 16px;
    color: var(--muted);
    font-family: var(--mono);
    font-size: 22px;
    white-space: nowrap;
}

.activity-icon {
    margin-right: 22px;
    color: var(--green);
}

.who {
    color: #4ade80;
}

.live-link {
    display: flex;
    align-items: center;
    gap: 24px;
    margin-left: auto;
    color: var(--dim);
}

.btn-close {
    margin-left: 24px;
    color: #7b7988;
}

.btn-close .icon {
    stroke-width: 1.25;
}

/* Floating feedback buttons */
.feedback {
    position: fixed;
    right: 40px;
    bottom: 40px;
    display: flex;
    height: 68px;
    background: var(--surface);
    border: 2px solid #3a3068;
    border-radius: 34px;
    box-shadow: 0 4px 12px rgba(0, 0, 0, 0.3);
    color: var(--muted);
    font-size: 24px;
    font-weight: 500;
}

.feedback button {
    display: flex;
    align-items: center;
    gap: 16px;
    padding: 0 24px;
}

.feedback button + button {
    border-left: 2px solid var(--border);
}
```
